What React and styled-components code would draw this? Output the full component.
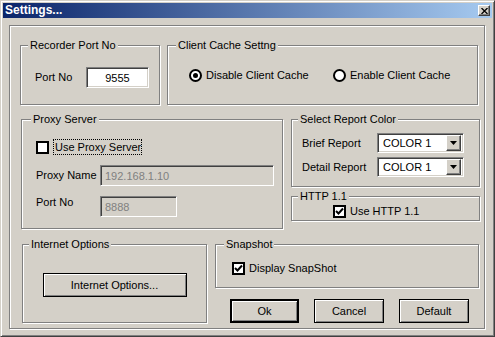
import React from 'react';
import styled, { createGlobalStyle, css } from 'styled-components';

const GlobalStyle = createGlobalStyle`
  html, body {
    margin: 0;
    padding: 0;
    background: #d4d0c8;
  }
  body {
    font-family: "Liberation Sans", Arial, sans-serif;
    font-size: 11px;
    color: #000;
  }
`;

const sunken = css`
  box-sizing: border-box;
  border: 1px solid;
  border-color: #808080 #fff #fff #808080;
  box-shadow: inset 1px 1px 0 #404040, inset -1px -1px 0 #d4d0c8;
`;

const raised = css`
  box-sizing: border-box;
  border: 1px solid;
  border-color: #fff #404040 #404040 #fff;
  box-shadow: inset -1px -1px 0 #808080;
`;

const Window = styled.div`
  box-sizing: border-box;
  width: 495px;
  height: 337px;
  background: #d4d0c8;
  border: 1px solid;
  border-color: #d4d0c8 #404040 #404040 #d4d0c8;
  box-shadow: inset 1px 1px 0 #fff, inset -1px -1px 0 #808080;
  padding: 2px;
  display: flex;
  flex-direction: column;
`;

const TitleBar = styled.div`
  height: 15px;
  flex: none;
  display: flex;
  align-items: center;
  justify-content: space-between;
  padding: 0 2px;
  background: linear-gradient(to right, #0a246a, #a6caf0);
`;

const Title = styled.span`
  color: #fff;
  font-weight: bold;
  font-size: 12px;
  line-height: 15px;
`;

const CloseBtn = styled.div`
  ${raised};
  width: 12px;
  height: 11px;
  background: #d4d0c8;
  display: flex;
  align-items: center;
  justify-content: center;
`;

const Body = styled.div`
  flex: 1;
  display: flex;
  padding: 7px 7px 5px 6px;
`;

const Frame = styled.div`
  flex: 1;
  border: 1px solid #808080;
  box-shadow: inset 1px 1px 0 #fff, 1px 1px 0 #fff;
  padding: 19px 0 0 10px;
  display: flex;
  flex-direction: column;
`;

const Row = styled.div`
  display: flex;
  gap: ${p => p.$gap}px;
  margin-left: ${p => p.$indent || 0}px;
  margin-bottom: ${p => p.$after || 0}px;
`;

const Column = styled.div`
  display: flex;
  flex-direction: column;
  gap: ${p => p.$gap || 0}px;
`;

const Group = styled.div`
  position: relative;
  box-sizing: border-box;
  width: ${p => p.$w}px;
  height: ${p => p.$h}px;
  border: 1px solid #808080;
  box-shadow: inset 1px 1px 0 #fff, 1px 1px 0 #fff;
  padding: ${p => p.$pad || '0'};
  display: flex;
  flex-direction: ${p => (p.$col ? 'column' : 'row')};
  align-items: ${p => p.$align || 'flex-start'};
  justify-content: ${p => p.$justify || 'flex-start'};
`;

const Legend = styled.span`
  position: absolute;
  top: -7px;
  left: ${p => p.$left || 7}px;
  padding: 0 2px;
  background: #d4d0c8;
  line-height: 13px;
  white-space: nowrap;
`;

const Label = styled.span`
  display: inline-block;
  width: ${p => (p.$w ? `${p.$w}px` : 'auto')};
  flex: none;
  white-space: nowrap;
  line-height: 13px;
`;

const Field = styled.div`
  display: flex;
  align-items: ${p => p.$align || 'center'};
  margin-top: ${p => p.$top || 0}px;
`;

const Input = styled.div`
  ${sunken};
  width: ${p => p.$w}px;
  height: 21px;
  padding: 0 4px;
  display: flex;
  align-items: center;
  justify-content: ${p => (p.$center ? 'center' : 'flex-start')};
  background: ${p => (p.$disabled ? '#d4d0c8' : '#fff')};
  color: ${p => (p.$disabled ? '#808080' : '#000')};
`;

const Select = styled.div`
  ${sunken};
  width: 87px;
  height: 20px;
  padding: 2px;
  display: flex;
  align-items: center;
  background: #fff;
`;

const SelectText = styled.span`
  flex: 1;
  padding-left: 3px;
  line-height: 13px;
`;

const ArrowBtn = styled.div`
  ${raised};
  width: 15px;
  height: 16px;
  background: #d4d0c8;
  display: flex;
  align-items: center;
  justify-content: center;
`;

const Option = styled.label`
  display: flex;
  align-items: center;
  gap: 4px;
  width: ${p => (p.$w ? `${p.$w}px` : 'auto')};
  white-space: nowrap;
  line-height: 13px;
`;

const Radio = styled.span`
  box-sizing: border-box;
  width: 13px;
  height: 13px;
  border-radius: 50%;
  border: 2px solid #000;
  background: #fff;
  display: flex;
  align-items: center;
  justify-content: center;

  &::after {
    content: '';
    width: 5px;
    height: 5px;
    border-radius: 50%;
    background: ${p => (p.$on ? '#000' : 'transparent')};
  }
`;

const Box = styled.span`
  box-sizing: border-box;
  width: 13px;
  height: 13px;
  flex: none;
  border: 2px solid #000;
  background: #fff;
  display: flex;
  align-items: center;
  justify-content: center;
`;

const Focus = styled.span`
  border: 1px dotted #000;
  padding: 1px 0 1px 1px;
  line-height: 12px;
`;

const Button = styled.div`
  box-sizing: border-box;
  width: ${p => p.$w}px;
  height: 24px;
  background: #d4d0c8;
  border: ${p => (p.$default ? 2 : 1)}px solid #000;
  box-shadow: inset 1px 1px 0 #fff, inset -1px -1px 0 #808080;
  display: flex;
  align-items: center;
  justify-content: center;
  line-height: 13px;
`;

const ButtonRow = styled.div`
  display: flex;
  gap: 15px;
  padding-left: 15px;
  margin-top: 11px;
`;

const Check = () => (
  <svg width="9" height="9" viewBox="0 0 9 9">
    <path d="M1 4 L3.5 6.5 L8 1.5" fill="none" stroke="#000" strokeWidth="2" />
  </svg>
);

const Arrow = () => (
  <svg width="7" height="4" viewBox="0 0 7 4">
    <path d="M0 0 H7 L3.5 4 Z" fill="#000" />
  </svg>
);

const CheckBox = ({ checked }) => <Box>{checked && <Check />}</Box>;

export default function App() {
  return (
    <>
      <GlobalStyle />
      <Window>
        <TitleBar>
          <Title>Settings...</Title>
          <CloseBtn>
            <svg width="7" height="6" viewBox="0 0 7 6">
              <path d="M0.5 0 L6.5 6 M6.5 0 L0.5 6" stroke="#000" strokeWidth="1.3" />
            </svg>
          </CloseBtn>
        </TitleBar>
        <Body>
          <Frame>
            <Row $gap={7} $after={14}>
              <Group $w={140} $h={60} $pad="21px 0 0 14px">
                <Legend>Recorder Port No</Legend>
                <Field>
                  <Label $w={51}>Port No</Label>
                  <Input $w={63} $center>9555</Input>
                </Field>
              </Group>
              <Group $w={311} $h={60} $pad="23px 0 0 21px">
                <Legend $left={8}>Client Cache Settng</Legend>
                <Option $w={144}>
                  <Radio $on />
                  Disable Client Cache
                </Option>
                <Option>
                  <Radio />
                  Enable Client Cache
                </Option>
              </Group>
            </Row>

            <Row $gap={8} $indent={1} $after={15}>
              <Group $w={262} $h={110} $col $pad="19px 0 0 14px">
                <Legend $left={9}>Proxy Server</Legend>
                <Option>
                  <CheckBox />
                  <Focus>Use Proxy Server</Focus>
                </Option>
                <Field $top={10}>
                  <Label $w={64}>Proxy Name</Label>
                  <Input $w={174} $disabled>192.168.1.10</Input>
                </Field>
                <Field $top={10} $align="flex-start">
                  <Label $w={64}>Port No</Label>
                  <Input $w={77} $disabled>8888</Input>
                </Field>
              </Group>
              <Column $gap={9}>
                <Group $w={189} $h={68} $col $pad="13px 0 0 10px">
                  <Legend $left={6}>Select Report Color</Legend>
                  <Field>
                    <Label $w={75}>Brief Report</Label>
                    <Select>
                      <SelectText>COLOR 1</SelectText>
                      <ArrowBtn><Arrow /></ArrowBtn>
                    </Select>
                  </Field>
                  <Field $top={4}>
                    <Label $w={75}>Detail Report</Label>
                    <Select>
                      <SelectText>COLOR 1</SelectText>
                      <ArrowBtn><Arrow /></ArrowBtn>
                    </Select>
                  </Field>
                </Group>
                <Group $w={189} $h={25} $pad="8px 0 0 41px">
                  <Legend $left={6}>HTTP 1.1</Legend>
                  <Option>
                    <CheckBox checked />
                    Use HTTP 1.1
                  </Option>
                </Group>
              </Column>
            </Row>

            <Row $gap={8} $indent={2}>
              <Group $w={185} $h={79} $align="center" $justify="center" $pad="3px 0 0 0">
                <Legend $left={6}>Internet Options</Legend>
                <Button $w={144}>Internet Options...</Button>
              </Group>
              <Column>
                <Group $w={264} $h={44} $pad="17px 0 0 16px">
                  <Legend $left={8}>Snapshot</Legend>
                  <Option>
                    <CheckBox checked />
                    Display SnapShot
                  </Option>
                </Group>
                <ButtonRow>
                  <Button $w={69} $default>Ok</Button>
                  <Button $w={70}>Cancel</Button>
                  <Button $w={70}>Default</Button>
                </ButtonRow>
              </Column>
            </Row>
          </Frame>
        </Body>
      </Window>
    </>
  );
}
